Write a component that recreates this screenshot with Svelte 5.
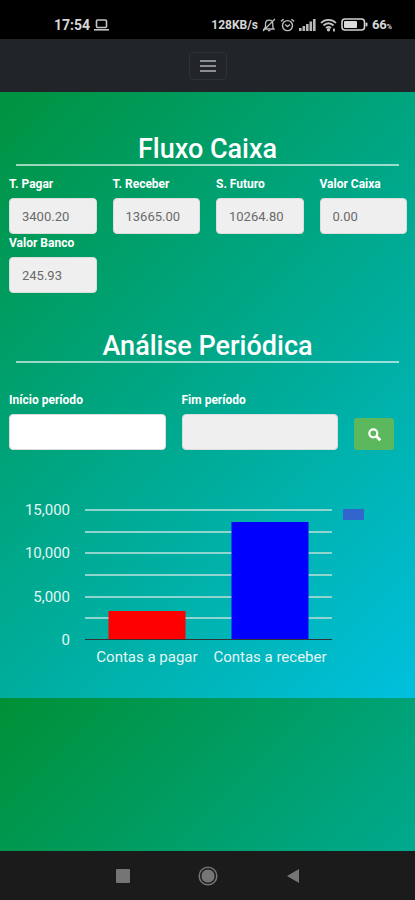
<script lang="ts">
  const totals = [
    { id: 'pagar', label: 'T. Pagar', value: '3400.20' },
    { id: 'receber', label: 'T. Receber', value: '13665.00' },
    { id: 'futuro', label: 'S. Futuro', value: '10264.80' },
    { id: 'caixa', label: 'Valor Caixa', value: '0.00' },
    { id: 'banco', label: 'Valor Banco', value: '245.93' }
  ];

  const bars = [
    { label: 'Contas a pagar', value: 3400.2, color: '#ff0000' },
    { label: 'Contas a receber', value: 13665, color: '#0000ff' }
  ];

  const ticks = [0, 2500, 5000, 7500, 10000, 12500, 15000];
  const plot = { left: 85, right: 332, top: 30, bottom: 160 };
  const slot = (plot.right - plot.left) / bars.length;
  const barWidth = 77;

  let inicio = $state('');
  let fim = $state('');

  function y(value: number) {
    return Math.round(plot.bottom - (value / 15000) * (plot.bottom - plot.top));
  }

  function center(i: number) {
    return Math.round(plot.left + slot * (i + 0.5));
  }
</script>

<div class="screen">
  <div class="status">
    <div class="status-group">
      <span class="clock">17:54</span>
      <svg width="15" height="12" viewBox="0 0 15 12" fill="none" stroke="#c4c4c4" stroke-width="1.6">
        <rect x="2.5" y="1" width="10" height="7.5" rx="1" />
        <path d="M0 10.8h15" />
      </svg>
    </div>
    <div class="status-group">
      <span class="speed">128KB/s</span>
      <svg width="14" height="14" viewBox="0 0 14 14" fill="none" stroke="#bdbdbd" stroke-width="1.3">
        <path d="M2 11h10L10.8 9V6C10.8 3.5 9.3 2.2 7.2 2.2S3.5 3.5 3.5 6v3zM5.8 12.700h2.600M13 1L1 13" />
      </svg>
      <svg width="15" height="14" viewBox="0 0 15 14" fill="none" stroke="#bdbdbd" stroke-width="1.4">
        <circle cx="7.5" cy="7.6" r="5" />
        <path d="M1 3.400L3.600 1.200M14 3.400L11.400 1.200M5.200 6.500l2.300 2 2.500-2" />
      </svg>
      <svg width="17" height="12" viewBox="0 0 17 12" fill="#b8b8b8">
        <rect x="0" y="9" width="2.6" height="3" />
        <rect x="3.5" y="7" width="2.6" height="5" />
        <rect x="7" y="5" width="2.6" height="7" />
        <rect x="10.5" y="2.5" width="2.6" height="9.5" />
        <rect x="14" y="0" width="2.6" height="12" />
      </svg>
      <svg width="17" height="14" viewBox="0 0 17 14" fill="none" stroke="#c4c4c4" stroke-width="1.8">
        <path d="M1 5C5 .8 12 .8 16 5M3.500 7.500c3-3 7-3 10 0M6 10c1.600-1.500 3.400-1.500 5 0" />
        <circle cx="8.5" cy="11.8" r=".8" />
        <path d="M14 10.500v3" />
      </svg>
      <svg width="27" height="13" viewBox="0 0 27 13">
        <rect x="1" y="1" width="22.5" height="11" rx="3" fill="none" stroke="#d2d2d2" stroke-width="1.6" />
        <rect x="3" y="3" width="13" height="7" rx="1" fill="#dcdcdc" />
        <rect x="24.5" y="4.5" width="2" height="4" rx="1" fill="#c8c8c8" />
      </svg>
      <span class="battery">66<small>%</small></span>
    </div>
  </div>

  <div class="page">
    <header class="navbar">
      <button class="toggler" type="button" aria-label="Menu">
        <svg width="16" height="16" viewBox="0 0 16 16" stroke="#8b8d90" stroke-width="2">
          <path d="M0 3h16M0 8h16M0 13h16" />
        </svg>
      </button>
    </header>

    <main>
      <h2>Fluxo Caixa</h2>
      <div class="row">
        {#each totals as t}
          <div class="col-3">
            <label for={t.id}>{t.label}</label>
            <input id={t.id} type="text" value={t.value} readonly />
          </div>
        {/each}
      </div>

      <h2 class="analise">Análise Periódica</h2>
      <form class="row" onsubmit={(e) => e.preventDefault()}>
        <div class="col-5">
          <label for="inicio">Início período</label>
          <input id="inicio" type="text" bind:value={inicio} />
        </div>
        <div class="col-5">
          <label for="fim">Fim período</label>
          <input id="fim" type="text" bind:value={fim} readonly />
        </div>
        <div class="col-2">
          <button class="search" type="submit" aria-label="Pesquisar">
            <svg width="13" height="13" viewBox="0 0 13 13" fill="none" stroke="#fff">
              <circle cx="5.3" cy="5.3" r="4" stroke-width="2.2" />
              <path d="M8.300 8.300l4 4" stroke-width="2.8" />
            </svg>
          </button>
        </div>
      </form>

      <svg class="chart" viewBox="0 0 415 218">
        {#each ticks as tick}
          <rect
            class={tick === 0 ? 'axis' : 'grid'}
            x={plot.left}
            y={y(tick) - 1}
            width={plot.right - plot.left}
            height={tick === 0 ? 1 : 2}
          />
          {#if tick % 5000 === 0}
            <text x="70" y={y(tick) + 5} text-anchor="end">{tick.toLocaleString('en-US')}</text>
          {/if}
        {/each}
        {#each bars as bar, i}
          <rect
            x={center(i) - barWidth / 2}
            y={y(bar.value)}
            width={barWidth}
            height={plot.bottom - y(bar.value) - 1}
            fill={bar.color}
          />
          <text x={center(i)} y="182" text-anchor="middle">{bar.label}</text>
        {/each}
        <rect x="343" y="29" width="21" height="11" fill="#3366cc" />
      </svg>
    </main>
  </div>

  <nav class="keys">
    <button type="button" aria-label="Recentes">
      <svg width="20" height="20" viewBox="0 0 20 20" fill="#757575">
        <rect x="3" y="3" width="14" height="14" rx="1" />
      </svg>
    </button>
    <button type="button" aria-label="Início">
      <svg width="20" height="20" viewBox="0 0 20 20">
        <circle cx="10" cy="10" r="8.8" fill="none" stroke="#757575" stroke-width="1.5" />
        <circle cx="10" cy="10" r="6.6" fill="#757575" />
      </svg>
    </button>
    <button type="button" aria-label="Voltar">
      <svg width="20" height="20" viewBox="0 0 20 20" fill="#757575">
        <path d="M4 10L16 3v14z" />
      </svg>
    </button>
  </nav>
</div>

<style>
  * {
    box-sizing: border-box;
  }

  :global(body) {
    margin: 0;
  }

  .screen {
    display: flex;
    flex-direction: column;
    min-height: 100vh;
    font-family: Roboto, "Liberation Sans", sans-serif;
    color: #fff;
  }

  .status {
    display: flex;
    justify-content: space-between;
    align-items: center;
    height: 39px;
    padding: 10px 23px 0 54px;
    background: #000;
    color: #d6d6d6;
    font-weight: 700;
    font-size: 12px;
  }

  .status-group {
    display: flex;
    align-items: center;
    gap: 4px;
  }

  .clock {
    font-size: 14px;
  }

  .battery {
    font-size: 13px;
  }

  small {
    font-size: 7px;
  }

  .page {
    flex: 1;
    background: linear-gradient(135deg, #009036, #00c0de) 0 0 / 100% 659px;
  }

  .navbar {
    display: flex;
    justify-content: center;
    align-items: center;
    height: 53px;
    background: #212529;
  }

  .toggler {
    display: flex;
    justify-content: center;
    align-items: center;
    width: 38px;
    height: 28px;
    padding: 0;
    background: none;
    border: 1px solid #2e3236;
    border-radius: 3px;
  }

  main {
    padding-top: 42px;
  }

  h2 {
    margin: 0 16px 9px;
    border-bottom: 2px solid rgba(255, 255, 255, 0.6);
    font-size: 27px;
    font-weight: 500;
    line-height: 30px;
    text-align: center;
  }

  .analise {
    margin-top: 38px;
    margin-bottom: 28px;
  }

  .row {
    display: flex;
    flex-wrap: wrap;
    padding-left: 1px;
  }

  .col-2,
  .col-3,
  .col-5 {
    padding: 0 8px;
  }

  .col-3 {
    width: 25%;
  }

  .col-5 {
    width: calc(100% * 5 / 12);
  }

  .col-2 {
    display: flex;
    align-items: flex-end;
    width: calc(100% / 6);
  }

  label {
    display: block;
    margin-bottom: 5px;
    font-size: 12px;
    font-weight: 700;
    line-height: 18px;
  }

  input {
    display: block;
    width: 100%;
    height: 36px;
    padding: 0 12px;
    background: #fff;
    border: 1px solid #dcdcdc;
    border-radius: 4px;
    color: #6a6a6a;
    font-family: inherit;
    font-size: 13px;
  }

  input:read-only {
    background: #efefef;
  }

  .search {
    display: flex;
    justify-content: center;
    align-items: center;
    width: 40px;
    height: 32px;
    padding: 0;
    background: #5cb85c;
    border: 0;
    border-radius: 3px;
  }

  .chart {
    display: block;
    width: 100%;
    margin-top: 30px;
  }

  .chart text {
    fill: #e4f6f4;
    font-size: 15px;
  }

  .grid {
    fill: #8ed5cf;
  }

  .axis {
    fill: #333;
  }

  .keys {
    display: flex;
    justify-content: center;
    align-items: center;
    gap: 65px;
    height: 49px;
    background: #1b1b1b;
  }

  .keys button {
    display: flex;
    padding: 0;
    background: none;
    border: 0;
  }
</style>
